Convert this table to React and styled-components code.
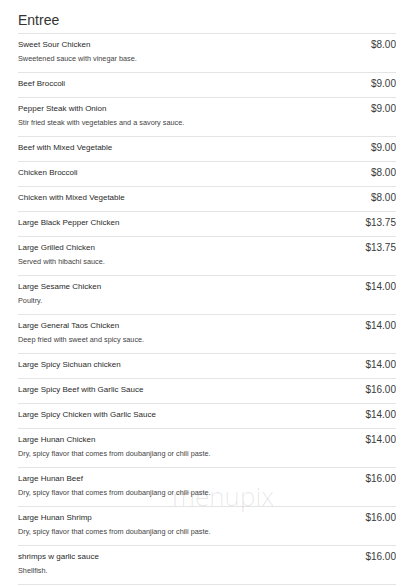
import React from 'react'
import styled, { createGlobalStyle } from 'styled-components'

const items = [
  { name: 'Sweet Sour Chicken', price: '$8.00', desc: 'Sweetened sauce with vinegar base.' },
  { name: 'Beef Broccoli', price: '$9.00' },
  { name: 'Pepper Steak with Onion', price: '$9.00', desc: 'Stir fried steak with vegetables and a savory sauce.' },
  { name: 'Beef with Mixed Vegetable', price: '$9.00' },
  { name: 'Chicken Broccoli', price: '$8.00' },
  { name: 'Chicken with Mixed Vegetable', price: '$8.00' },
  { name: 'Large Black Pepper Chicken', price: '$13.75' },
  { name: 'Large Grilled Chicken', price: '$13.75', desc: 'Served with hibachi sauce.' },
  { name: 'Large Sesame Chicken', price: '$14.00', desc: 'Poultry.' },
  { name: 'Large General Taos Chicken', price: '$14.00', desc: 'Deep fried with sweet and spicy sauce.' },
  { name: 'Large Spicy Sichuan chicken', price: '$14.00' },
  { name: 'Large Spicy Beef with Garlic Sauce', price: '$16.00' },
  { name: 'Large Spicy Chicken with Garlic Sauce', price: '$14.00' },
  { name: 'Large Hunan Chicken', price: '$14.00', desc: 'Dry, spicy flavor that comes from doubanjiang or chili paste.' },
  { name: 'Large Hunan Beef', price: '$16.00', desc: 'Dry, spicy flavor that comes from doubanjiang or chili paste.' },
  { name: 'Large Hunan Shrimp', price: '$16.00', desc: 'Dry, spicy flavor that comes from doubanjiang or chili paste.' },
  { name: 'shrimps w garlic sauce', price: '$16.00', desc: 'Shellfish.' },
]

function App() {
  return (
    <>
      <GlobalStyle />
      <Page>
        <Title>Entree</Title>
        {items.map((item) => (
          <Item key={item.name}>
            <Top>
              <Name>{item.name}</Name>
              <Price>{item.price}</Price>
            </Top>
            {item.desc && <Desc>{item.desc}</Desc>}
          </Item>
        ))}
        <Watermark aria-hidden="true">menupix</Watermark>
      </Page>
    </>
  )
}

export default App

const GlobalStyle = createGlobalStyle`
    body{
        margin: 0;
        background: #fff;
        font-family: "Liberation Sans", Arial, sans-serif;
        color: #333;
    }
`

const Page = styled.div`
    position: relative;
    width: 378px;
    margin-left: 18px;
    overflow: hidden;
`

const Title = styled.h2`
    margin: 0;
    padding: 12px 0 5px;
    font-size: 14px;
    line-height: 16px;
    font-weight: normal;
    color: #333;
    border-bottom: 1px solid #e4e4e4;
`

const Item = styled.div`
    padding: 5px 0 8px;
    border-bottom: 1px solid #e4e4e4;
`

const Top = styled.div`
    display: flex;
    justify-content: space-between;
    align-items: center;
    height: 11px;
`

const Name = styled.span`
    font-size: 8px;
    line-height: 11px;
    color: #2a2a2a;
`

const Price = styled.span`
    font-size: 10px;
    line-height: 11px;
    color: #3a3a3a;
`

const Desc = styled.div`
    margin-top: 4px;
    font-size: 7.3px;
    line-height: 10px;
    color: #444;
`

const Watermark = styled.div`
    position: absolute;
    left: 154px;
    top: 478px;
    font-family: "Open Sans", sans-serif;
    font-weight: 300;
    font-size: 26px;
    line-height: 36px;
    color: rgba(0, 0, 0, 0.1);
    pointer-events: none;
`
